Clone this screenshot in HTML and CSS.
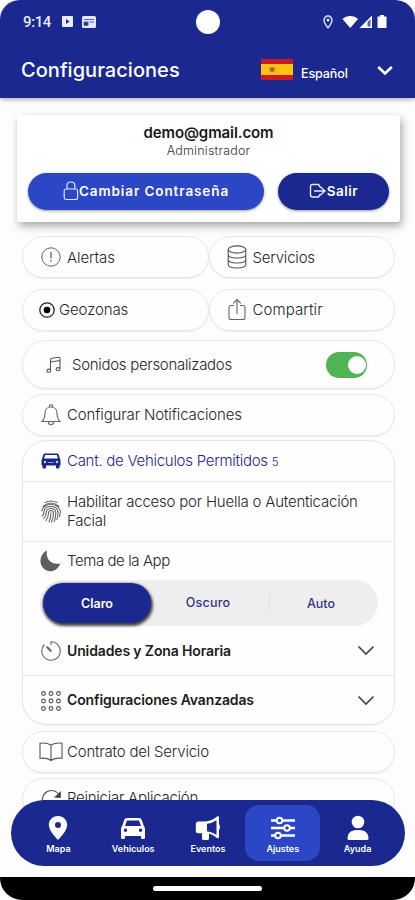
FILE: index.html
```html
<!DOCTYPE html>
<html lang="es">
<head>
<meta charset="utf-8">
<title>Configuraciones</title>
<link rel="stylesheet" href="styles.css">
</head>
<body>
<div class="phone">
  <header class="top">
    <div class="status">
      <span class="clock">9:14</span>
      <svg class="st-app" width="11" height="11" viewBox="0 0 11 11"><rect width="11" height="11" rx="1" fill="#e9ecfb"/><path d="M4 3l3.500 2.500L4 8z" fill="#1b288f"/></svg>
      <svg class="st-news" width="14" height="12" viewBox="0 0 14 12"><rect width="14" height="12" rx="1.500" fill="#e4e8fa"/><path d="M2 3.500h10M7.500 6H12M2 6h4v3.500H2z" stroke="#5461b4" stroke-width="1" fill="#1b288f"/></svg>
      <span class="camera"></span>
      <svg class="st-loc" width="10" height="14" viewBox="0 0 10 14"><path d="M5 1C2.700 1 1 2.700 1 5c0 3 4 7.800 4 7.800S9 8 9 5c0-2.300-1.700-4-4-4z" fill="none" stroke="#dfe4fa" stroke-width="1.400"/><circle cx="5" cy="5" r="1.500" fill="#dfe4fa"/></svg>
      <svg class="st-net" width="46" height="14" viewBox="0 0 46 14"><path d="M.5 4C4.500 0 12 0 16 4L8.200 13z" fill="#fff"/><path d="M30 .5V13H17.500z" fill="#fff"/><path d="M25.500 7v4.500h3V4z" fill="#1b288f" opacity=".75"/><path d="M38 1.500V0h4v1.500h2.500V13h-9V1.500z" fill="#fff"/></svg>
    </div>
    <div class="titlebar">
      <h1 class="title">Configuraciones</h1>
      <svg class="flag" width="32" height="21" viewBox="0 0 32 21"><path d="M0 0h32v21H0z" fill="#c81c22"/><path d="M0 5h32v11H0z" fill="#fdc312"/><path d="M8 8h1.500v5.500H8zm5 0h1.300v5.500H13z" fill="#c79a55"/><path d="M9.500 8.500h3.500v3l-1.700 2-1.800-1.500z" fill="#b9512c"/></svg>
      <span class="lang">Español</span>
      <svg class="lang-arrow" width="18" height="11" viewBox="0 0 18 11"><path d="M2.200 2L9 8.500 15.800 2" fill="none" stroke="#fff" stroke-width="2.600"/></svg>
    </div>
  </header>

  <main class="content">
    <section class="account">
      <div class="email">demo@gmail.com</div>
      <div class="role">Administrador</div>
      <div class="buttons">
        <button class="btn btn-pass"><svg width="16" height="20" viewBox="0 0 16 20" fill="none" stroke="#dfe5ff" stroke-width="1.200"><rect x="1.200" y="8" width="13.400" height="10.500" rx="2"/><path d="M4 8V4.500C4 2.300 5.600 1 7.900 1s3.900 1.300 3.900 3.500V8"/></svg><span class="t-pass">Cambiar Contraseña</span></button>
        <button class="btn btn-exit"><svg width="18" height="16" viewBox="0 0 18 16" fill="none" stroke="#e6eaff" stroke-width="1.400"><path d="M11.500 4.500L9.500 1.500H3.500Q1.500 1.500 1.500 3.500v8q0 2.500 2 2.500h6l2-3M5 8h11M11.500 4L16 8l-4.500 4"/></svg><span class="t-exit">Salir</span></button>
      </div>
    </section>

    <div class="pair">
      <div class="pill"><svg class="ico" width="20" height="20" viewBox="0 0 20 20" fill="none" stroke="#606060"><circle cx="10" cy="10" r="9.200"/><path d="M10 5v6.500M10 13.200v1.600" stroke-width="1.300"/></svg><span class="t t-alertas">Alertas</span></div>
      <div class="pill"><svg class="ico" width="20" height="24" viewBox="0 0 20 24" fill="none" stroke="#555" stroke-width="1.100"><ellipse cx="10" cy="4.500" rx="8.800" ry="3.600"/><path d="M1.200 4.500v15c0 4.600 17.600 4.600 17.600 0v-15M1.200 9.500c0 4.600 17.600 4.600 17.600 0M1.200 14.500c0 4.600 17.600 4.600 17.600 0"/></svg><span class="t t-servicios">Servicios</span></div>
    </div>
    <div class="pair">
      <div class="pill pill-geo"><svg class="ico" width="16" height="16" viewBox="0 0 16 16"><circle cx="8" cy="8" r="7.200" fill="none" stroke="#222" stroke-width="1.300"/><circle cx="8" cy="8" r="3.300" fill="#000"/></svg><span class="t t-geo">Geozonas</span></div>
      <div class="pill"><svg class="ico" width="20" height="24" viewBox="0 0 20 24" fill="none" stroke="#666" stroke-width="1.100"><path d="M7 7.500H4Q2 7.500 2 9.500v10q0 2 2 2h12q2 0 2-2v-10q0-2-2-2h-3M10 16V1.500M6.200 5.300L10 1.500l3.800 3.800"/></svg><span class="t t-comp">Compartir</span></div>
    </div>

    <div class="pill pill-sound"><svg class="ico" width="16" height="18" viewBox="0 0 16 18" fill="none" stroke="#555" stroke-width="1.100"><path d="M4.500 14.500V4Q4.500 2.500 6 2.300L12.500 1.300Q14 1.200 14 2.700V12.500M4.500 6L14 4.500"/><ellipse cx="2.800" cy="14.700" rx="1.800" ry="1.600"/><ellipse cx="12" cy="13.200" rx="1.900" ry="1.600"/></svg><span class="t t-sound">Sonidos personalizados</span><span class="switch"><span class="knob"></span></span></div>

    <div class="pill pill-notif"><svg class="ico" width="20" height="22" viewBox="0 0 20 22" fill="none" stroke="#666" stroke-width="1.100"><path d="M1 17.500c2.500-2.500 3-5 3-8.500C4 5.500 6.500 3 10 3s6 2.500 6 6c0 3.500.5 6 3 8.500zM8.500 3V1h3v2M7.500 18c0 3.600 5 3.600 5 0"/></svg><span class="t t-notif">Configurar Notificaciones</span></div>

    <section class="group">
      <div class="row row-veh"><svg class="ico" width="20" height="16" viewBox="0 0 20 16"><path d="M4 .5h12q1.300 0 1.700 1.200L19 6q.5.500.5 1.500v5h-1v2q0 1-1 1h-1.500q-1 0-1-1v-2H5v2q0 1-1 1H2.500q-1 0-1-1v-2h-1v-5Q.5 6.500 1 6l1.300-4.300Q2.700.5 4 .5z" fill="#16258d"/><path d="M4.200 2h11.600L17 5.500H3z" fill="#fff"/><circle cx="4" cy="9" r="1.200" fill="#d6daf4"/><circle cx="16" cy="9" r="1.200" fill="#d6daf4"/><path d="M7 9.500h6" stroke="#8e98d8"/></svg><span class="t t-veh">Cant. de Vehiculos Permitidos</span><span class="count">5</span></div>
      <div class="row row-finger"><svg class="ico" width="20" height="24" viewBox="0 0 20 24" fill="none" stroke="#606060" stroke-width="1.050" stroke-linecap="round"><path d="M4 2.500Q10-.5 16 2.500M2 6.500Q10-.5 18 6.500M.8 11Q2.500 4.500 10 4.500T19.200 11q.3 3-.7 5.500M1 16Q3 15 3 12q0-5.500 7-5.500t7 6.500q0 4-1.200 6.500M2.700 18.500Q5.200 16 5.200 12.500q0-4 4.800-4t4.800 4.500q0 5-1.700 8.500M5 20.800Q7.500 17 7.500 13q0-2.500 2.500-2.500t2.500 2.700q0 5-2.200 9M8 21.800q2-4 2-9"/></svg><span class="t t-finger">Habilitar acceso por Huella o Autenticación<br>Facial</span></div>
      <div class="row row-theme">
        <div class="theme-head"><svg class="ico" width="21" height="22" viewBox="0 0 21 22"><path d="M7 .5C5.500 9 11 15.500 20.500 13.500 18 19 14 21.500 10 21.300 4.500 21 .5 16.500.5 11.300.5 6.500 3 2.500 7 .5z" fill="#5f5f5f"/></svg><span class="t t-theme">Tema de la App</span></div>
        <div class="segment"><span class="seg seg-on">Claro</span><span class="seg seg-mid">Oscuro</span><span class="seg seg-end">Auto</span></div>
        <div class="fold"><svg class="ico" width="20" height="20" viewBox="0 0 20 20" fill="none" stroke="#666" stroke-width="1.100"><path d="M10 4V.8a9.200 9.200 0 1 1-6.500 2.700M5.500 5.500l5 5" /><path d="M6 6l4 4" stroke-width="1.900"/></svg><span class="t bold t-unid">Unidades y Zona Horaria</span><svg class="chev" width="18" height="11" viewBox="0 0 18 11"><path d="M1.500 1.500L9 9l7.500-7.500" fill="none" stroke="#444" stroke-width="1.700"/></svg></div>
      </div>
      <div class="row fold"><svg class="ico" width="20" height="20" viewBox="0 0 20 20" fill="none" stroke="#555" stroke-width="1.100"><g id="r"><circle cx="2.500" cy="2.500" r="1.900"/><circle cx="10" cy="2.500" r="1.900"/><circle cx="17.500" cy="2.500" r="1.900"/></g><use href="#r" y="7.500"/><use href="#r" y="15"/></svg><span class="t bold t-conf">Configuraciones Avanzadas</span><svg class="chev" width="18" height="11" viewBox="0 0 18 11"><path d="M1.500 1.500L9 9l7.500-7.500" fill="none" stroke="#444" stroke-width="1.700"/></svg></div>
    </section>

    <div class="pill pill-contract"><svg class="ico" width="24" height="20" viewBox="0 0 24 20" fill="none" stroke="#555" stroke-width="1.100"><path d="M12 3Q7 .3 1 1.300v15Q8 15.500 12 18.500 16 15.500 23 16.300v-15Q17 .3 12 3zM12 3v15.500"/></svg><span class="t t-contract">Contrato del Servicio</span></div>
    <div class="pill pill-restart"><svg class="ico" width="22" height="21" viewBox="0 0 22 21"><path d="M1.200 12C1 6 5 1.500 10.300 1.500c3.200 0 5.700 1.500 7.500 4M1.200 12c.4 9 14 11 17.500 2" fill="none" stroke="#555" stroke-width="1.200"/><path d="M19.800 2v7l-6.800-.6z" fill="#444"/></svg><span class="t t-restart">Reiniciar Aplicación</span></div>
  </main>

  <nav class="tabs">
    <div class="tab"><svg width="24" height="26" viewBox="0 0 24 26"><path fill-rule="evenodd" d="M12 1C6.500 1 2.800 5 2.800 10c0 6 9.200 15 9.200 15s9.200-9 9.200-15C21.200 5 17.500 1 12 1zm0 6a3 3 0 1 1 0 6 3 3 0 0 1 0-6z" fill="#fff"/></svg><span>Mapa</span></div>
    <div class="tab"><svg width="26" height="26" viewBox="0 0 26 26"><path fill-rule="evenodd" d="M7 3h12q2 0 2.800 2l2 6q1.200 1 1.200 3v8.500q0 1.500-1.500 1.500h-1q-1.500 0-1.500-1.500V21H5v1.500Q5 24 3.500 24h-1Q1 24 1 22.500V14q0-2 1.200-3l2-6Q5 3 7 3zm0 2.500L5 11h16l-2-5.500zM5.500 13.500a1.700 1.700 0 1 0 0 3.400 1.700 1.700 0 0 0 0-3.400zm15 0a1.700 1.700 0 1 0 0 3.400 1.700 1.700 0 0 0 0-3.400z" fill="#fff"/></svg><span>Vehiculos</span></div>
    <div class="tab"><svg width="26" height="26" viewBox="0 0 26 26"><path fill-rule="evenodd" d="M3 6.500h7Q17 6 22 1.500q2-1 2 1V9q2 3 0 6v7q0 2-2 1-4-3.500-8-4.500v5q0 1.500-1.500 1.500H8.500Q7 25 7 23.500v-5.300H3Q.8 18.200.8 16V9Q.8 6.500 3 6.500zM12 8.800v7.400q5 .5 9.500 3.500V5.300Q17 8.300 12 8.800z" fill="#fff"/></svg><span>Eventos</span></div>
    <div class="tab tab-on"><svg width="26" height="26" viewBox="0 0 26 26"><path d="M1 5.500h24M1 13h24M1 20.500h24" stroke="#fff" stroke-width="2.700"/><g fill="#2c47c5" stroke="#fff" stroke-width="2"><circle cx="9.500" cy="5.500" r="2.800"/><circle cx="17" cy="13" r="2.800"/><circle cx="8" cy="20.500" r="2.800"/></g></svg><span>Ajustes</span></div>
    <div class="tab"><svg width="24" height="26" viewBox="0 0 24 26"><circle cx="12" cy="7" r="6.300" fill="#fff"/><path d="M1.500 23.500C1.500 17.500 5.500 15 12 15s10.500 2.500 10.500 8.500q0 1.500-1.500 1.500H3q-1.500 0-1.500-1.500z" fill="#fff"/></svg><span>Ayuda</span></div>
  </nav>
  <footer class="home"><span class="home-line"></span></footer>
</div>
</body>
</html>
```
FILE: styles.css
```css
* { box-sizing: border-box; }
body { margin: 0; background: #fff; font-family: Inter, "Liberation Sans", sans-serif; }
.phone { position: relative; width: 415px; height: 900px; overflow: hidden; background: #fdfdfd; display: flex; flex-direction: column; }
svg { display: block; flex: none; }

.top { height: 98px; flex: none; background: #1b288f; border-radius: 20px 20px 0 0; box-shadow: 0 2px 5px rgba(0,0,0,.28), 0 -30px 0 #fff; color: #fff; }
.status { position: relative; height: 43px; display: flex; align-items: center; padding: 0 27px 0 23px; }
.clock { font: 500 15px/20px Roboto, sans-serif; width: 29px; letter-spacing: -.4px; color: #e9ecfb; }
.st-app { margin-left: 10px; }
.st-news { margin-left: 9px; }
.camera { position: absolute; left: 196px; top: 10px; width: 24px; height: 24px; border-radius: 50%; background: #fff; }
.st-loc { margin-left: auto; }
.st-net { margin-left: 9px; }
.titlebar { display: flex; align-items: center; height: 54px; padding: 0 21px 0 21px; }
.title { margin: 0; width: 240px; font-size: 20px; line-height: 26px; font-weight: 500; letter-spacing: .04px; white-space: nowrap; }
.flag { margin-top: -2px; }
.lang { margin: 8px 0 0 8px; width: 75px; font-size: 12.500px; line-height: 18px; font-weight: 500; letter-spacing: -.1px; }

.content { flex: 1; padding: 17px 20px 0 22px; }
.account { margin: 0 -5px 14px; height: 107px; width: 383px; padding-top: 8px; background: #fff; border-radius: 3px; box-shadow: 2px 4px 9px rgba(0,0,0,.35); text-align: center; }
.email { font-size: 15px; line-height: 20px; font-weight: 600; letter-spacing: -.1px; color: #181818; }
.role { font-size: 12.500px; line-height: 16px; font-weight: 300; letter-spacing: .2px; color: #333; }
.buttons { display: flex; gap: 14px; padding: 14px 11px 0; }
.btn { height: 37px; padding: 0 0 1px; border: 0; border-radius: 19px; display: flex; align-items: center; justify-content: center; color: #fff; font: 600 13.500px/18px Inter, sans-serif; box-shadow: 0 1px 3px rgba(0,0,0,.4); white-space: nowrap; }
.btn-pass { width: 236px; background: #2c47c5; }
.btn-exit { width: 111px; background: #1b288f; }
.t-pass { letter-spacing: .9px; }
.t-exit { letter-spacing: .5px; }

.pair { display: flex; margin-bottom: 11px; }
.pill { height: 42px; display: flex; align-items: center; padding-left: 18px; border: 1px solid #e8e8e8; border-radius: 25px; background: #fefefe; box-shadow: 0 1px 1px rgba(0,0,0,.06); }
.pair .pill { width: 187px; }
.ico { margin-right: 6px; }
.pair .pill + .pill { padding-left: 17px; }
.pair .pill-geo { padding-left: 16px; }
.pill-geo .ico { margin-right: 4px; }
.t { font-size: 15px; line-height: 19px; font-weight: 300; color: #262626; white-space: nowrap; padding-bottom: 2px; }
.t-alertas { padding-bottom: 0; letter-spacing: -.1px; }
.t-servicios { padding-bottom: 0; letter-spacing: -.2px; }
.t-geo { letter-spacing: -.12px; }
.t-comp { letter-spacing: .1px; }
.t-sound { padding-bottom: 0; letter-spacing: -.3px; }
.t-notif { letter-spacing: -.13px; }
.t-veh { letter-spacing: -.27px; }
.t-finger { letter-spacing: -.21px; }
.t-theme { letter-spacing: -.42px; }
.t-contract { letter-spacing: -.2px; }
.t-restart { letter-spacing: -.25px; }
.pill-sound { height: 49px; margin-top: -2px; padding-left: 23px; padding-right: 27px; }
.pill-sound .ico { margin-right: 10px; }
.switch { margin-left: auto; width: 41px; height: 26px; border-radius: 13px; background: #50b354; padding: 4px 1px 0 22px; }
.knob { display: block; width: 18px; height: 18px; border-radius: 50%; background: #fff; }
.pill-notif { margin-top: 5px; }

.group { margin-top: 4px; height: 285px; border: 1px solid #e6e6e6; border-radius: 25px; background: #fefefe; box-shadow: 0 1px 1px rgba(0,0,0,.06); }
.row { border-bottom: 1px solid #e8e8e8; padding-left: 18px; display: flex; align-items: center; }
.row:last-child { border-bottom: 0; }
.row-veh { height: 41px; }
.row-veh .t, .count { color: #25258b; }
.count { font-size: 11.500px; font-weight: 300; margin: 1px 0 0 4px; }
.row-finger { height: 60px; }
.row-theme { display: block; height: 134px; padding-left: 17px; }
.theme-head { display: flex; align-items: center; height: 38px; }
.segment { width: 338px; height: 46px; border-radius: 23px; background: #eee; display: flex; align-items: center; padding: 3px; }
.seg { font-size: 12.500px; font-weight: 500; text-align: center; color: #32328a; }
.seg-on { width: 108px; height: 40px; line-height: 41px; border-radius: 20px; background: #1b288f; color: #fff; font-weight: 600; box-shadow: 1px 2px 3px 1px rgba(0,0,0,.7), 0 0 0 1px #d5d5d5; }
.seg-mid { width: 119px; padding-right: 4px; border-right: 1px solid #ddd; line-height: 18px; letter-spacing: .2px; }
.seg-end { width: 102px; }
.fold { display: flex; align-items: center; height: 49px; }
.row-theme .fold { padding-left: 1px; }
.bold { font-size: 14px; font-weight: 600; letter-spacing: -.13px; color: #1c1c1c; }
.t-unid { padding-bottom: 0; }
.chev { margin-left: auto; margin-right: 19px; }

.pill-contract { margin-top: 6px; padding-left: 16px; }
.pill-contract .ico { margin-right: 4px; }
.pill-restart { margin-top: 5px; }
.pill-restart .ico { margin-right: 4px; }
.pill-restart .t { padding-bottom: 3px; }

.tabs { position: absolute; left: 11px; top: 800px; width: 394px; height: 66px; border-radius: 33px; background: #1b288f; display: flex; align-items: center; padding: 0 10px; }
.tab { width: 75px; height: 56px; border-radius: 14px; display: flex; flex-direction: column; align-items: center; padding-top: 10px; color: #fff; font-size: 9px; line-height: 12px; font-weight: 600; gap: 2px; }
.tab-on { background: #2c47c5; }

.home { position: absolute; left: 0; bottom: 0; width: 415px; height: 23px; background: #000; border-radius: 0 0 22px 22px; box-shadow: 0 30px 0 #fff; display: flex; justify-content: center; padding-top: 9px; }
.home-line { width: 109px; height: 5px; border-radius: 3px; background: #fff; }
```
